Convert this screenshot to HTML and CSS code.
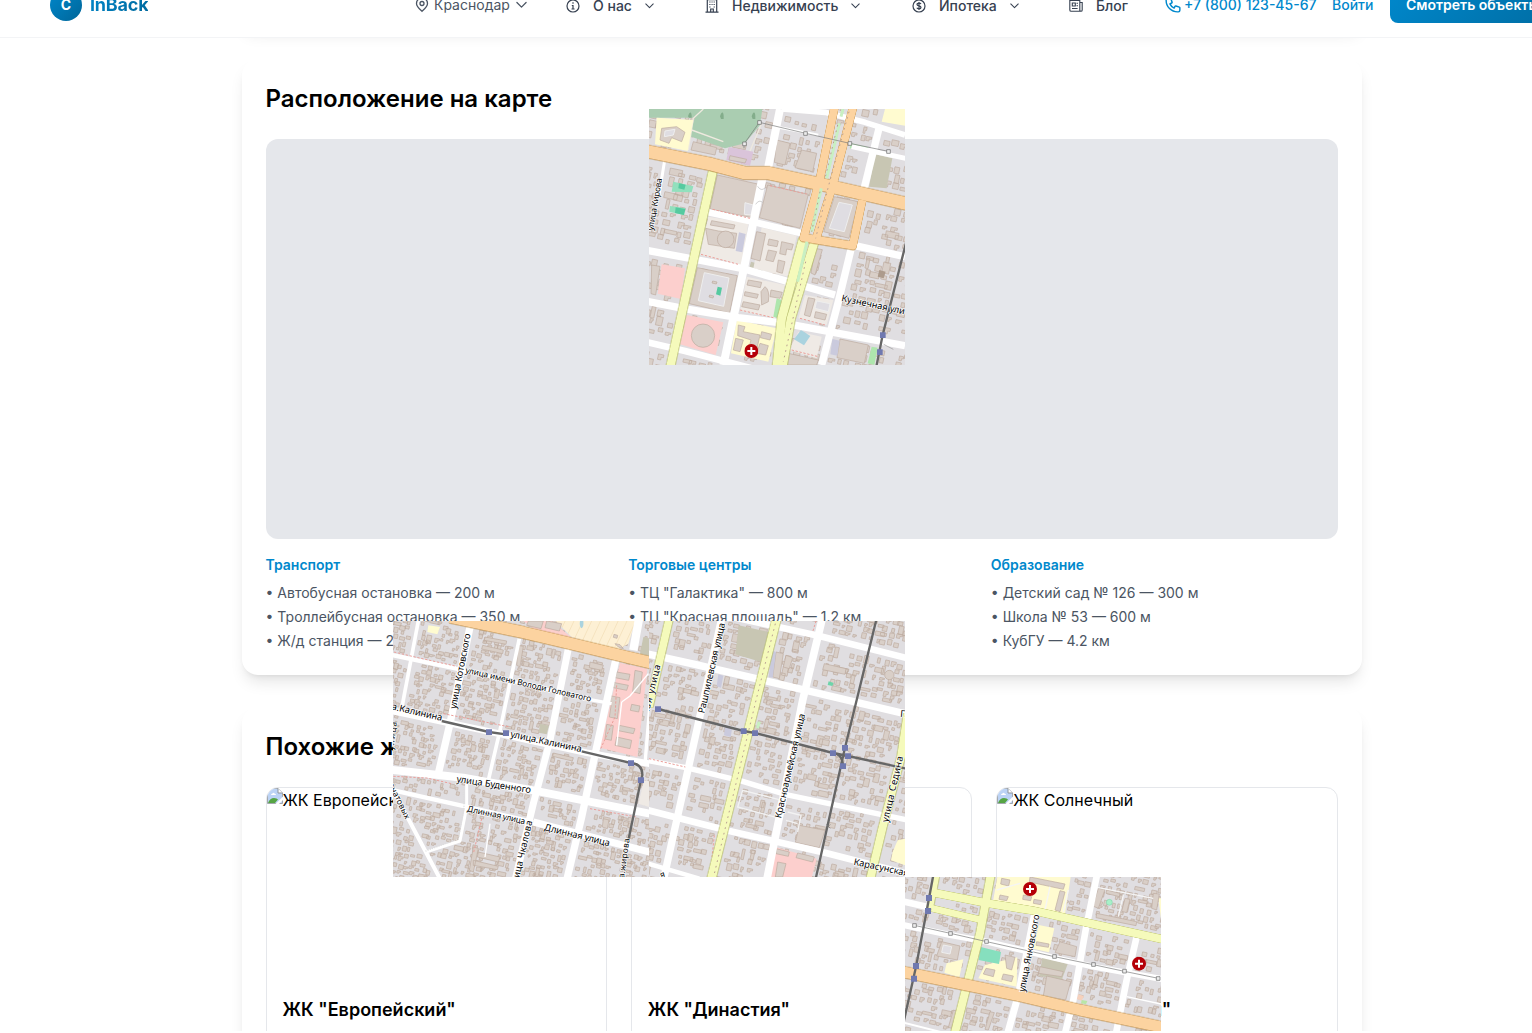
FILE: index.html
```html
<!DOCTYPE html>
<html lang="ru">
<head>
<meta charset="utf-8">
<title>InBack</title>
<link rel="stylesheet" href="styles.css">
</head>
<body>
<svg width="0" height="0" class="defs">
  <defs>
    <symbol id="chevron" viewBox="0 0 12 8"><path d="M1 1.3 6 6.3 11 1.3" fill="none" stroke="currentColor" stroke-width="1.4" stroke-linecap="round" stroke-linejoin="round"/></symbol>
    <symbol id="broken" viewBox="0 0 16 16">
      <path d="M.5.5H11L15.500 5V15.500H.5Z" fill="#bcd3f5" stroke="#a3a8ad"/>
      <path d="M11 .5V5h4.500" fill="#fff" stroke="#8f959b"/>
      <path d="M4 7q0-1.500 1.500-1.500 1-1.500 2 0 1.500 0 1.500 1.500Z" fill="#fff"/>
      <path d="M1 15q2-5 6-5 3 0 4 1.500L8 15Z" fill="#56a544"/>
      <path d="M8.500 16 16 8.500V12L12 16Z" fill="#fff"/>
    </symbol>
    <symbol id="hospital" viewBox="-21 -21 42 42"><circle r="21" fill="#b50008"/><path d="M0-12V12M-12 0H12" stroke="#fff" stroke-width="6"/></symbol>
    <pattern id="stripes" width="24" height="24" patternUnits="userSpaceOnUse" patternTransform="rotate(25)"><path d="M0 0H24V24H0Z" fill="#fdf0d4"/><path d="M1 0V24" stroke="#f2dcb4" stroke-width="2"/></pattern>
  </defs>
</svg>
<div class="page">
  <header class="header">
    <a class="logo"><span class="logo-mark">C</span><span class="logo-name">InBack</span></a>
    <a class="city">
      <svg width="14" height="16" viewBox="0 0 14 16" fill="none" stroke="currentColor" stroke-width="1.3"><path d="M7 14.300C4.500 12 1.500 9.500 1.500 6.400a5.500 5.500 0 0 1 11 0C12.500 9.500 9.500 12 7 14.300Z"/><circle cx="7" cy="6.500" r="2"/></svg>
      <span>Краснодар</span><svg class="city-arrow" width="11" height="8"><use href="#chevron"/></svg>
    </a>
    <a class="nav-item"><svg width="14" height="14" viewBox="0 0 14 14" fill="none" stroke="currentColor" stroke-width="1.200"><circle cx="7" cy="7" r="6"/><path d="M7 3.300V4.700M5.800 6.500H7V10M5.500 10H8.600"/></svg><span>О нас</span><svg width="9" height="6"><use href="#chevron"/></svg></a>
    <a class="nav-item"><svg width="14" height="14" viewBox="0 0 14 14" fill="none" stroke="currentColor" stroke-width="1.200"><path d="M2.300 13V.6H11.700V13M.5 13.200H13.500M5.700 13V10H8.300V13"/><path d="M4.300 3H5.500M6.500 3H7.600M8.600 3H9.800M4.300 5.500H5.500M6.500 5.500H7.600M8.600 5.500H9.800M4.300 8H5.500M8.600 8H9.800"/></svg><span>Недвижимость</span><svg width="9" height="6"><use href="#chevron"/></svg></a>
    <a class="nav-item"><svg width="14" height="14" viewBox="0 0 14 14" fill="none" stroke="currentColor" stroke-width="1.200"><circle cx="7" cy="7" r="6"/><path d="M9 5Q8.500 4.200 7 4.200 5 4.200 5 5.500 5 6.600 7 6.900 9 7.300 9 8.500 9 9.800 7 9.800 5.300 9.800 4.800 8.800M7 3V11"/></svg><span>Ипотека</span><svg width="9" height="6"><use href="#chevron"/></svg></a>
    <a class="nav-item"><svg width="14" height="14" viewBox="0 0 14 14" fill="none" stroke="currentColor" stroke-width="1.100"><path d="M.8 1.500H10.800V12.300H2.200Q.8 12.300.8 11ZM10.800 3.500H13.200V11Q13.200 12.300 12 12.300 10.800 12.300 10.800 11M3 9.500H8.600"/><path d="M3.300 4H6.300V7H3.300ZM7.500 4.200H9M7.500 6.700H9"/></svg><span>Блог</span></a>
    <a class="phone"><svg width="16" height="16" viewBox="1.500 1.500 21 21" fill="none" stroke="currentColor" stroke-width="1.900" stroke-linejoin="round"><path d="M3 5a2 2 0 0 1 2-2h3.280a1 1 0 0 1 .948.684l1.498 4.493a1 1 0 0 1-.502 1.210l-2.257 1.130a11.042 11.042 0 0 0 5.516 5.516l1.130-2.257a1 1 0 0 1 1.210-.502l4.493 1.498a1 1 0 0 1 .684.949V19a2 2 0 0 1-2 2h-1C9.716 21 3 14.284 3 6V5z"/></svg><span>+7 (800) 123-45-67</span></a>
    <a class="login">Войти</a>
    <a class="cta">Смотреть объекты</a>
  </header>

  <main class="content">
    <section class="card card-previous"></section>
    <section class="card">
      <h2>Расположение на карте</h2>
      <div class="map"></div>
      <div class="places">
        <div><h3>Транспорт</h3><ul><li>• Автобусная остановка — 200 м</li><li>• Троллейбусная остановка — 350 м</li><li>• Ж/д станция — 2.1 км</li></ul></div>
        <div><h3>Торговые центры</h3><ul><li>• ТЦ "Галактика" — 800 м</li><li>• ТЦ "Красная площадь" — 1.2 км</li></ul></div>
        <div><h3>Образование</h3><ul><li>• Детский сад № 126 — 300 м</li><li>• Школа № 53 — 600 м</li><li>• КубГУ — 4.2 км</li></ul></div>
      </div>
    </section>
    <section class="card">
      <h2>Похожие жилые комплексы</h2>
      <div class="similar">
        <article><div class="photo"><svg width="16" height="16"><use href="#broken"/></svg><span>ЖК Европейский</span></div><h4>ЖК "Европейский"</h4></article>
        <article><div class="photo"><svg width="16" height="16"><use href="#broken"/></svg><span>ЖК Династия</span></div><h4>ЖК "Династия"</h4></article>
        <article><div class="photo"><svg width="16" height="16"><use href="#broken"/></svg><span>ЖК Солнечный</span></div><h4>ЖК "Солнечный"</h4></article>
      </div>
    </section>
  </main>

  <svg class="tile tile-north" viewBox="12 12 768 768">
    <g class="houses" data-seed="7" data-size="1.25"></g>
    <path class="park" d="M12 12H352L345 60 300 115 240 130 130 92 150 38 12 38Z"/>
    <path class="trail" d="M175 12 145 40 130 135M140 75 235 110M350 55 310 150"/>
    <g fill="#83ad8b"><path d="M228 42h8V32q0-8-4-10-4 2-7 12ZM323 42h8V32q0-8-4-10-4 2-7 12ZM132 38h8V32q0-8-4-10-4 2-7 12Z"/></g>
    <path class="school" d="M35 38 145 45 128 138 30 118ZM720 12H780V62L710 50ZM275 645 395 670 370 770 258 745Z"/>
    <path class="shop" d="M252 126 325 140 315 182 244 165Z"/>
    <path class="olive" d="M690 148 742 160 725 250 672 245ZM318 470 355 480 350 498 312 492Z"/>
    <path class="pink" d="M125 630 235 652 212 750 105 718ZM50 478 120 490 108 582 38 566Z"/>
    <path class="light" d="M190 335 310 355 290 480 165 450ZM460 680 530 695 515 760 432 735ZM350 368 455 392 430 515 325 490ZM305 515 420 540 390 640 285 618ZM480 570 565 585 545 660 460 640Z"/>
    <path class="building" d="M217 210 342 238 320 338 195 312ZM368 240 490 268 465 370 343 338ZM157 488 277 512 254 624 133 596ZM568 275 640 290 612 400 536 380ZM200 347 270 360 266 372 196 360ZM182 370 220 378 275 385 268 430 190 418ZM50 70 95 65 120 82 110 110 80 98 72 115 45 105ZM395 105 435 115 420 180 388 172ZM470 135 515 145 503 200 450 188ZM585 702 670 720 658 775 576 758ZM335 380 362 386 345 468 318 460ZM510 430 532 434 510 510 498 504ZM430 745 520 765 515 780 425 780ZM145 110 215 128 210 150 138 135ZM20 480 45 484 32 570 18 566ZM280 660 300 665 295 680 345 690 335 735 310 735 318 705 278 692ZM255 152 305 163 300 174 252 165Z"/>
    <path class="building" d="M372 402 400 408 396 425 368 420ZM410 410 445 418 440 435 425 432 422 450 404 446ZM370 435 395 440 385 470 362 465ZM400 465 420 470 412 505 395 500ZM310 525 350 532 346 548 306 540ZM360 545Q375 555 370 590L350 600 348 560ZM300 560 340 568 336 580 298 572ZM295 590 345 600 340 615 290 605ZM378 555 412 562 405 580 375 575ZM490 578 510 582 495 635 478 630ZM512 620 545 628 540 645 508 638ZM350 680 380 688 375 705 346 698ZM345 715 370 722 362 750 335 745ZM272 700 295 705 285 740 265 735Z"/>
    <path class="yard" d="M178 503 252 519 236 604 160 587ZM582 292 622 300 598 380 553 370ZM60 78 90 73 85 90 58 95ZM300 293 325 300 318 330 298 328ZM515 588 555 596 550 620 510 610Z"/>
    <path class="building" d="M203 528 216 531 214 537 201 534ZM194 570 206 573 204 579 192 576Z"/>
    <circle class="building" cx="242" cy="403" r="25"/><circle class="building" cx="174" cy="692" r="35"/>
    <path fill="#92e0bd" d="M85 230 145 244 140 262 80 260ZM75 303 122 310 116 330 73 320Z"/><path fill="#55caa0" d="M102 235 122 239 118 254 100 250ZM92 307 121 312 117 330 90 324ZM218 545 231 548 226 572 213 568Z"/>
    <path fill="#aee6ad" d="M618 115 670 127 667 137 614 130ZM395 580 410 585 400 640 385 635ZM680 725 698 728 688 780 668 775Z"/>
    <path fill="#cacadd" d="M282 382 302 387 292 442 272 438ZM562 702 584 707 577 752 556 748Z"/>
    <path fill="#aad3df" d="M468 675 496 693 477 721 447 703Z"/>
    <path fill="#ad9b8c" d="M703 495 722 500 716 520 698 515Z"/>
    <g class="white-road">
      <polyline points="405,12 370,185" stroke-width="24"/><polyline points="352,220 300,475 235,780" stroke-width="24"/><polyline points="60,160 42,270" stroke-width="9"/>
      <polyline points="0,435 160,465 290,490 570,570" stroke-width="22"/><polyline points="190,322 330,352 470,385" stroke-width="20"/><polyline points="0,588 130,613 280,638 420,655 780,722" stroke-width="22"/>
      <polyline points="0,710 120,738 320,790" stroke-width="20"/><polyline points="620,425 580,590 530,780" stroke-width="22"/><polyline points="702,70 655,260" stroke-width="22"/><polyline points="410,12 540,22 660,52 780,90" stroke-width="17"/>
      <polyline points="630,422 780,455" stroke-width="22"/><polyline points="620,125 790,162" stroke-width="15"/><polyline points="390,65 520,90" stroke-width="8"/>
    </g>
    <g class="path"><path d="M203 313 315 340M375 242 485 267M168 448 280 478M285 615 385 638M465 640 540 660M120 640 104 710M440 735 520 755"/></g>
    <g class="yellow-road"><polyline points="203,200 140,490 75,790" stroke-width="25"/><polyline points="475,400 410,640 395,790" stroke-width="26"/><polyline points="510,405 438,640 412,790" stroke-width="25"/><polyline points="530,245 640,275" stroke-width="7"/></g>
    <g class="orange-road"><polyline points="570,0 523,230 476,398 623,422 652,285" stroke-width="24"/><polyline points="626,0 562,245 512,405" stroke-width="24"/><polyline points="0,138 200,178 300,204 370,204 530,238 790,297" stroke-width="38"/></g>
    <path class="green-strip" d="M594 12 588 35M583 55 545 220M529 250 500 380M486 410 458 530"/>
    <path class="dots" d="M612 20 550 245 512 400M482 470 415 770M578 60 540 220M525 260 500 380"/>
    <g fill="none" stroke="#bbb" stroke-width="2"><path d="M338 244q10 16 22 5M332 298q10-16 22-5"/></g>
    <path class="tram" d="M297 130V117L343 52 482 85 614 115 730 139"/>
    <path class="node" d="M293 111h11v11h-11ZM338 47h11v11h-11ZM476 80h11v11h-11ZM609 110h11v11h-11ZM725 134h11v11h-11Z"/>
    <path class="rail" d="M784 410 713 690 693 790"/>
    <path class="stop" d="M705 682h17v17h-17ZM696 733h17v17h-17Z"/>
    <path d="M716 718 745 733" stroke="#999" stroke-width="2"/>
    <g class="label"><text transform="translate(24 377) rotate(-80)" textLength="158">улица Кирова</text><text class="big" transform="translate(588 588) rotate(12)" textLength="194">Кузнечная ули</text></g>
    <use href="#hospital" x="298" y="717" width="42" height="42"/>
  </svg>

  <svg class="tile tile-west" viewBox="9 12 768 768">
    <g class="houses" data-seed="21" data-size=".88"></g>
    <path fill="url(#stripes)" d="M485 0H740L715 80 680 100 545 60Z"/>
    <path class="pink" d="M400 12H485L545 62 440 42ZM690 138 772 155 742 420 630 392Z"/>
    <path class="building" d="M415 12H460L453 35 410 25ZM470 12 515 20 508 42 465 32ZM680 165 720 172 716 190 675 182ZM735 160 757 165 750 230 728 224ZM664 195 715 205 710 220 660 210ZM655 235 690 242 682 305 658 300 665 255 650 252ZM650 322 670 326 664 370 645 366ZM688 325 735 335 730 350 685 341ZM680 360 725 370 720 395 675 385ZM725 262 750 267 746 285 721 280ZM285 60 350 72 348 82 283 70ZM278 85 340 99 338 110 275 96ZM250 690 265 694 250 765 238 760ZM265 705 330 720 325 735 262 720ZM250 730 325 748 322 758 250 745ZM383 85 400 88 390 150 380 145ZM600 135 640 145 635 160 598 152ZM640 605 657 609 652 635 637 630ZM490 408 550 422 547 432 488 418ZM675 80 690 83 700 95 685 90ZM672 52 683 55 681 64 670 61Z"/>
    <path class="school" d="M115 25 150 30 142 52 112 45Z"/><path class="olive" d="M450 320 477 326 470 352 446 347ZM760 60 777 64V120L750 110Z"/>
    <path class="light" d="M762 490 777 493V570L745 560Z"/><path fill="#aad3df" d="M570 12h10q2 20-6 22-7-6-4-22Z"/>
    <g class="white-road">
      <polyline points="85,12 35,275" stroke-width="11"/><polyline points="242,20 182,310 145,470" stroke-width="22"/><polyline points="388,65 330,340 295,490" stroke-width="11"/><polyline points="535,95 480,370 430,560 375,790" stroke-width="21"/>
      <polyline points="677,130 620,390 575,600 530,790" stroke-width="22"/><polyline points="0,113 200,155 240,165" stroke-width="13"/><polyline points="240,165 400,200 600,248 665,260" stroke-width="10"/><polyline points="0,280 160,314 350,355 590,407 790,442" stroke-width="20"/>
      <polyline points="0,458 220,482 430,520 790,592" stroke-width="24"/><polyline points="0,518 225,568 430,615" stroke-width="13"/><polyline points="430,615 790,708" stroke-width="21"/><polyline points="9,520 60,615 155,795" stroke-width="12"/><polyline points="230,495 230,570 210,672 105,706" stroke-width="9"/>
      <polyline points="748,0 730,100" stroke-width="25"/><polyline points="785,200 765,440" stroke-width="10"/>
      <polyline points="695,255 680,385" stroke-width="4"/><polyline points="695,255 720,237 775,170" stroke-width="4"/><polyline points="300,620 285,720" stroke-width="4"/>
    </g>
    <path class="path" d="M12 105 75 120 200 148M160 290 360 330M10 478 110 483 185 500M600 575 740 600M275 605 250 710M680 205 675 300 630 400M520 60 460 45"/>
    <path fill="none" stroke="#ddd" stroke-width="4" stroke-dasharray="3 4" d="M220 510 222 570 205 665 105 703"/>
    <g class="orange-road"><polyline points="180,0 400,46 540,79 690,115 790,139" stroke-width="35"/></g>
    <path class="rail" d="M155 312 297 345 352 353M575 403 722 438Q758 440 757 475L753 489 715 670"/>
    <path class="stop" d="M288 337h18v17h-18ZM339 340h18v17h-18ZM714 430h18v17h-18ZM744 481h18v17h-18Z"/>
    <g class="label">
      <text class="big" transform="translate(198 277) rotate(-79)" textLength="230">улица Котовского</text><text transform="translate(225 167) rotate(13)" textLength="387">улица имени Володи Головатого</text>
      <text class="big" transform="translate(4 277) rotate(13)" textLength="155">а.Калинина</text><text class="big" transform="translate(360 360) rotate(12)" textLength="218">улица.Калинина</text>
      <text class="big" transform="translate(199 495) rotate(8.500)" textLength="225">улица Буденного</text><text transform="translate(230 583) rotate(12.500)" textLength="178">Длинная улица</text><text class="big" transform="translate(461 639) rotate(14)" textLength="202">Длинная улица</text>
      <text class="big" transform="translate(384 800) rotate(-77)" textLength="192">лица Чкалова</text><text transform="translate(700 800) rotate(-82)" textLength="136">ца.жирова</text><text transform="translate(-4 505) rotate(64)" textLength="114">гнатовых</text><text transform="translate(10 400) rotate(-83)" textLength="85">улица</text>
    </g>
  </svg>

  <svg class="tile tile-center" viewBox="9 12 768 768">
    <g class="houses" data-seed="55" data-size="1.05"></g>
    <path class="olive" d="M278 25 368 45 345 135 268 112Z"/><path class="pink" d="M388 690 512 725 495 790H362Z"/>
    <path class="building" d="M460 625 537 640 520 692 448 676ZM390 105 412 110 400 185 380 180ZM395 735 420 740 410 780H388ZM455 708 505 720 500 735 450 722ZM390 695 430 705 427 718 390 710ZM420 115 440 122 430 155 412 150ZM60 650 100 660 98 672 58 660ZM535 140 600 155 597 172 530 158Z"/>
    <path class="school" d="M755 670 777 665V745L735 730 740 705Z"/><path fill="#cacadd" d="M378 100 390 105 380 182 368 180ZM217 172 232 176 225 212 212 208ZM237 330 258 336 254 360 234 355Z"/>
    <path fill="#6dd4a9" d="M548 193 563 198 559 207 545 204Z"/><path fill="#c8efc1" d="M335 313 345 316 338 335 330 332Z"/>
    <circle class="building" cx="730" cy="174" r="14"/>
    <g fill="none" stroke="#f2f2f2" stroke-width="4"><path d="M290 520 400 548 385 600 275 570ZM425 585 465 595 455 645M420 610 455 620"/></g>
    <g class="white-road">
      <polyline points="228,0 130,440 52,790" stroke-width="22"/><polyline points="530,0 470,250 362,790" stroke-width="23"/><polyline points="260,0 520,57 790,125" stroke-width="20"/><polyline points="0,110 150,143 340,187 790,293" stroke-width="22"/>
      <polyline points="0,430 120,452 290,493 420,533 790,610" stroke-width="16"/><polyline points="0,578 250,642 540,708 790,772" stroke-width="20"/><polyline points="0,738 160,785" stroke-width="13"/>
    </g>
    <path class="path" d="M9 425 118 450M205 655 198 720M702 615 675 760M510 12 500 45"/>
    <g class="yellow-road"><polyline points="71,0 9,270" stroke-width="23"/><polyline points="393,0 330,250 195,790" stroke-width="26"/><polyline points="785,290 765,420 710,630 672,790" stroke-width="24"/></g>
    <path class="dots" d="M388 20 330 250 205 770"/>
    <path class="rail" d="M693 0 597 392 508 790M36 276 293 342 327 348 561 408 606 417 790 457M561 408Q590 410 591 447"/>
    <path class="stop" d="M27 268h18v17h-18ZM284 334h18v17h-18ZM318 340h18v17h-18ZM552 400h18v17h-18ZM588 384h18v17h-18ZM597 409h18v17h-18ZM582 439h18v17h-18Z"/>
    <path d="M541 622 553 634M553 622 541 634" stroke="#777" stroke-width="2"/>
    <g class="label">
      <text class="big" transform="translate(175 290) rotate(-77)" textLength="277">Рашпилевская улица</text><text class="big" transform="translate(405 605) rotate(-77)" textLength="321">Красноармейская улица</text><text class="big" transform="translate(726 617) rotate(-77)" textLength="202">улица Седина</text>
      <text class="big" transform="translate(622 743) rotate(12)" textLength="168">Карасунская</text><text class="big" transform="translate(-6 345) rotate(-76)" textLength="206">овская улица</text><text class="big" transform="translate(762 299) rotate(5)">П</text><text transform="translate(44 782) rotate(-15)">я</text>
    </g>
  </svg>

  <svg class="tile tile-east" viewBox="15 21 768 768">
    <g class="houses" data-seed="91" data-size="1.05"></g>
    <path class="school" d="M292 21H512L495 132 278 100ZM417 165 463 175 447 247 400 236ZM255 285 352 262 350 350 235 325ZM140 280 190 268 178 322 133 308ZM775 85H783V145Z"/>
    <path class="olive" d="M427 262 503 282 485 330 418 318Z"/>
    <path class="building" d="M390 21 495 42 490 58 388 36ZM480 62 495 66 480 125 465 120ZM595 55 615 59 595 115 578 108ZM590 130 710 155 708 167 588 143ZM440 318 512 335 497 390 430 378ZM420 290 490 305 485 320 416 310ZM410 215 447 222 445 232 408 226ZM480 215 530 230 525 260 465 248ZM125 215 180 228 172 270 110 258ZM620 60 660 70 658 80 618 70ZM675 85 690 88 680 128 665 124ZM760 70 778 72 770 120 755 115ZM315 255 345 262 335 300 320 295ZM160 420 172 424 155 475 145 472ZM270 425 283 428 265 480 255 478ZM305 25 330 30 326 48 302 42ZM370 75 395 80 392 92 368 88ZM402 88 425 92 422 104 400 100ZM300 75 325 80 320 92 297 88ZM258 295 285 300 280 320 250 312ZM310 312 340 318 335 335 305 328Z"/>
    <path fill="#86dfbe" d="M242 231 303 246 297 282 236 270Z"/><path class="yard" d="M130 225 155 230 150 252 125 247Z"/><circle cx="628" cy="97" r="9" fill="#a8f0c8" stroke="#59bf91"/>
    <path fill="#f5d1bd" d="M535 373 552 378 545 392 530 387Z"/><path fill="#b9e6a7" d="M545 390 562 393 558 403 543 400Z"/>
    <g fill="none" stroke="#f5f5f5" stroke-width="4"><path d="M450 50 435 120M505 60 490 125M290 60 360 40M670 75 655 140M580 50 760 85"/></g>
    <g class="white-road">
      <polyline points="0,92 80,110" stroke-width="20"/><polyline points="0,163 150,195 260,215 460,263 580,290 790,328" stroke-width="18"/><polyline points="592,10 557,180 520,390 495,490" stroke-width="20"/><polyline points="710,200 680,330 648,490" stroke-width="20"/><polyline points="405,125 355,375 323,490" stroke-width="21"/><polyline points="0,455 130,488" stroke-width="6"/><polyline points="680,380 783,402" stroke-width="4"/>
    </g>
    <g class="yellow-road"><polyline points="110,12 90,115" stroke-width="18"/><polyline points="95,115 245,150" stroke-width="20"/><polyline points="100,68 265,100 400,122 560,158 790,208" stroke-width="24"/><polyline points="273,10 240,190 163,495" stroke-width="24"/></g>
    <g class="orange-road"><polyline points="0,304 200,345 370,380 540,420 790,472" stroke-width="33"/></g>
    <path class="tram" d="M43 166 151 190 260 215 463 260 580 284 673 304 775 325"/>
    <path class="node" d="M38 161h11v11h-11ZM146 185h11v11h-11ZM254 209h11v11h-11ZM458 254h11v11h-11ZM575 278h11v11h-11ZM668 298h11v11h-11ZM769 320h11v11h-11Z"/>
    <path class="rail" d="M101 10 80 123 48 290 10 460"/><path class="stop" d="M78 75h18v18h-18ZM75 114h18v18h-18ZM39 279h18v18h-18ZM33 317h18v18h-18Z"/>
    <g class="label"><text class="big" transform="translate(374 367) rotate(-79)" textLength="236">улица Янковского</text></g>
    <use href="#hospital" x="369" y="36" width="42" height="42"/><use href="#hospital" x="696" y="260" width="42" height="42"/>
  </svg>
</div>
<script src="houses.js"></script>
</body>
</html>
```
FILE: styles.css
```css
* { box-sizing: border-box; }
body { margin: 0; background: #fff; font-family: Inter, "Liberation Sans", sans-serif; color: #000; overflow: hidden; }
h2, h3, h4, ul { margin: 0; padding: 0; }
.defs { position: absolute; }
.page { position: relative; height: 1031px; overflow: hidden; }

.header {
  position: relative; z-index: 2;
  display: grid; grid-template-columns: 365px 151px 139px 207px 157px 96px 167px 58px 220px; align-items: center;
  height: 65px; margin-top: -27px; padding-left: 50px;
  background: #fff; border-bottom: 1px solid #f3f4f6;
  font-size: 14px; line-height: 20px; white-space: nowrap; color: #374151;
}
.header > a { display: flex; align-items: center; }
.logo { gap: 8px; }
.logo-mark { display: grid; place-items: center; width: 32px; height: 32px; border-radius: 50%; background: linear-gradient(135deg, #0088cc, #006699); color: #fff; font-weight: 700; }
.logo-name { font-size: 18px; line-height: 28px; font-weight: 700; letter-spacing: -.2px; background: linear-gradient(135deg, #0088cc, #006699); background-clip: text; color: transparent; }
.city { gap: 5px; color: #4b5563; }
.city-arrow { margin-left: 1px; }
.nav-item { font-weight: 500; padding-top: 2px; }
.nav-item span { margin: 0 13px; }
.phone { gap: 3px; font-weight: 500; color: #0088cc; }
.login { font-weight: 500; color: #0088cc; }
.header > .cta { height: 36px; padding-left: 16px; border-radius: 8px; background: linear-gradient(135deg, #0088cc, #006699); color: #fff; font-weight: 600; }

.content { display: flex; flex-direction: column; gap: 32px; width: 1120px; margin: -31px 0 0 241.5px; }
.card { background: #fff; border-radius: 16px; padding: 24px; box-shadow: 0 10px 15px -3px rgba(0,0,0,.1), 0 4px 6px -4px rgba(0,0,0,.1); }
.card-previous { height: 20px; padding: 0; }
h2 { margin-bottom: 24px; font-size: 24px; line-height: 32px; font-weight: 600; }
.map { height: 400px; border-radius: 12px; background: #e5e7eb; }
.places { display: grid; grid-template-columns: repeat(3, 1fr); gap: 16px; margin-top: 16px; font-size: 14px; line-height: 20px; }
h3 { margin-bottom: 8px; font-size: 14px; font-weight: 600; color: #0088cc; }
ul { display: grid; gap: 4px; list-style: none; color: #4b5563; }
.similar { display: grid; grid-template-columns: repeat(3, 1fr); gap: 24px; }
.similar article { height: 380px; border: 1px solid #e5e7eb; border-radius: 12px; overflow: hidden; }
.photo { display: flex; height: 192px; font-size: 16px; line-height: 24px; }
h4 { padding: 16px; font-size: 18px; line-height: 28px; font-weight: 600; }

.tile { position: absolute; width: 256px; height: 256px; background: #e0dee1; overflow: hidden; }
.tile-north { left: 649px; top: 109px; }
.tile-west { left: 393px; top: 621px; }
.tile-center { left: 649px; top: 621px; }
.tile-east { left: 905px; top: 877px; }
.houses path, .building { fill: #d9cfc8; stroke: #bcaa9e; stroke-width: 2; }
.yard { fill: #dfdde2; stroke: #eee; stroke-width: 3; }
.park { fill: #aacdb1; }
.trail { fill: none; stroke: #eee9df; stroke-width: 4; }
.school { fill: #fffbd0; }
.shop { fill: #dac4da; }
.olive { fill: #c8c6b3; }
.pink { fill: #fccfcd; }
.light { fill: #efeae5; }
.white-road { fill: none; stroke: #fff; stroke-linejoin: round; }
.yellow-road { fill: none; stroke: #f5fabb; stroke-linejoin: round; filter: drop-shadow(1px 0 0 #aeb45c) drop-shadow(-1px 0 0 #aeb45c); }
.orange-road { fill: none; stroke: #fcd3a0; stroke-linejoin: round; filter: drop-shadow(0 1px 0 #b38237) drop-shadow(0 -1px 0 #c69959); }
.path { fill: none; stroke: #eb9f9a; stroke-width: 3; stroke-dasharray: 7 5; }
.dots { fill: none; stroke: #b99f91; stroke-width: 3; stroke-dasharray: 5 12; }
.green-strip { fill: none; stroke: #c9f0c2; stroke-width: 9; }
.tram { fill: none; stroke: #777; stroke-width: 2; }
.node { fill: #eee; stroke: #666; stroke-width: 2; }
.rail { fill: none; stroke: #666; stroke-width: 7; }
.stop { fill: #7079b0; }
.label { font-family: "Noto Sans", sans-serif; font-size: 25px; fill: #000; stroke: #fff; stroke-width: 4px; paint-order: stroke; stroke-linejoin: round; }
.label text { text-rendering: geometricPrecision; }
.label .big { font-size: 28px; }
```
FILE: houses.js
```js
// Fills each tile with small houses on a tilted grid, keeping them clear of the roads.
function distance(x, y, a, b) {
  const dx = b[0] - a[0], dy = b[1] - a[1];
  const t = Math.max(0, Math.min(1, ((x - a[0]) * dx + (y - a[1]) * dy) / (dx * dx + dy * dy)));
  return Math.hypot(x - a[0] - t * dx, y - a[1] - t * dy);
}

document.querySelectorAll('.houses').forEach(group => {
  let seed = Number(group.dataset.seed);
  const size = Number(group.dataset.size);
  const random = () => (seed = (seed * 16807) % 2147483647) / 2147483647;
  for (let i = 0; i < 9; i++) random();
  const roads = [...group.parentNode.querySelectorAll('polyline')].map(line => ({
    half: Number(line.getAttribute('stroke-width')) / 2,
    points: line.getAttribute('points').split(' ').map(p => p.split(',').map(Number))
  }));
  const clear = (x, y, r) => roads.every(road =>
    road.points.every((p, i) => !i || distance(x, y, road.points[i - 1], p) > road.half + r));
  const cos = Math.cos(0.21), sin = Math.sin(0.21);
  const step = 20 * size;
  let d = '';
  for (let v = -250; v < 900; v += step) {
    for (let u = -50; u < 1050; u += step) {
      const cu = u + random() * 12, cv = v + random() * 12;
      let w = (7 + random() * 10) * size, h = (7 + random() * 9) * size;
      const kind = random();
      if (kind > 0.9) w *= 1.9; else if (kind > 0.82) h *= 1.9;
      const x = cu * cos - cv * sin, y = cu * sin + cv * cos;
      if (random() < 0.16 || !clear(x, y, Math.max(w, h) / 2)) continue;
      const corners = [[-w, -h], [w, -h], [w, h], [-w, h]];
      if (kind < 0.25) corners.splice(2, 1, [w, 0], [w * 0.2, 0], [w * 0.2, h]);
      d += 'M' + corners.map(([p, q]) =>
        (x + (p * cos - q * sin) / 2).toFixed(1) + ' ' + (y + (p * sin + q * cos) / 2).toFixed(1)).join('L') + 'Z';
    }
  }
  const path = document.createElementNS('http://www.w3.org/2000/svg', 'path');
  path.setAttribute('d', d);
  group.append(path);
});
```
